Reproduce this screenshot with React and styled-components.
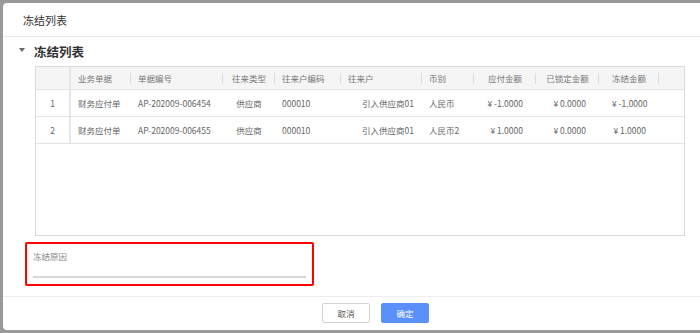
import React from 'react';
import styled, { createGlobalStyle } from 'styled-components';

const GlobalStyle = createGlobalStyle`
  html, body {
    margin: 0;
    padding: 0;
    background: #999;
    overflow: hidden;
  }
  body {
    font-family: "Noto Sans CJK SC", "Noto Sans", sans-serif;
  }
`

const Page = styled.div`
  width: 700px;
  height: 333px;
  padding: 3px 0 0 3px;
  box-sizing: border-box;
  overflow: hidden;
`

const Dialog = styled.div`
  width: 745px;
  height: 327px;
  background: #fff;
  border-radius: 4px;
  display: flex;
  flex-direction: column;
`

const Header = styled.div`
  height: 33px;
  display: flex;
  align-items: center;
  padding-left: 20px;
  font-size: 11px;
  color: #333;
  border-bottom: 1px solid #e8e8e8;
`

const Body = styled.div`
  flex: 1;
  display: flex;
  flex-direction: column;
`

const SectionTitle = styled.div`
  display: flex;
  align-items: center;
  height: 18px;
  margin-top: 5px;
  padding-left: 16px;
  font-size: 12.5px;
  font-weight: 700;
  color: #333;
`

const Caret = styled.span`
  width: 0;
  height: 0;
  border-left: 3px solid transparent;
  border-right: 3px solid transparent;
  border-top: 4px solid #666;
  margin-right: 9px;
  margin-top: -2px;
`

const TableWrap = styled.div`
  margin: 6px 0 0 32px;
  width: 650px;
  height: 170px;
  box-sizing: border-box;
  border: 1px solid #d9d9d9;
`

const Table = styled.table`
  width: 648px;
  border-collapse: collapse;
  table-layout: fixed;
  font-size: 8.5px;
  color: #666;
`

const Th = styled.th`
  position: relative;
  height: 22px;
  padding: 0 ${p => p.$pad || 7}px;
  font-weight: 400;
  color: #777;
  text-align: ${p => p.$align || 'left'};
  background: #f5f5f5;
  border-bottom: 1px solid #e3e3e3;
  border-right: ${p => (p.$index ? '2px solid #e6e6e6' : 'none')};
  white-space: nowrap;

  &::after {
    content: ${p => (p.$mark ? "''" : 'none')};
    position: absolute;
    right: 0;
    top: 6px;
    height: 11px;
    width: 1px;
    background: #dcdcdc;
  }
`

const Td = styled.td`
  height: 26px;
  padding: 0 ${p => p.$pad || 7}px;
  text-align: ${p => p.$align || 'left'};
  border-bottom: 1px solid #e3e3e3;
  border-right: ${p => (p.$index ? '2px solid #e6e6e6' : 'none')};
  white-space: nowrap;
  overflow: hidden;
`

const ReasonBox = styled.div`
  margin: 6px 0 0 22px;
  width: 289px;
  height: 44px;
  box-sizing: border-box;
  border: 2px solid #f00;
  border-radius: 2px;
  padding: 6px 6px 0 6px;
  display: flex;
  flex-direction: column;
`

const ReasonLabel = styled.label`
  font-size: 8.5px;
  color: #888;
  line-height: 12px;
`

const ReasonInput = styled.div`
  margin-top: 14px;
  height: 0;
  border-bottom: 2px solid #d6d6d6;
`

const Footer = styled.div`
  margin-top: 10px;
  border-top: 1px solid #eee;
  display: flex;
  justify-content: center;
  gap: 11px;
  padding-top: 6px;
`

const Button = styled.button`
  width: 48px;
  height: 20px;
  box-sizing: border-box;
  font-family: inherit;
  font-size: 8.5px;
  border-radius: 2px;
  padding: 0;
  border: 1px solid ${p => (p.$primary ? '#5b8ff9' : '#d4d4d4')};
  background: ${p => (p.$primary ? '#5b8ff9' : '#fff')};
  color: ${p => (p.$primary ? '#fff' : '#555')};
`

const columns = [
  { key: 'idx', title: '', width: 34, align: 'center', index: true },
  { key: 'bill', title: '业务单据', width: 61, mark: true },
  { key: 'no', title: '单据编号', width: 92, mark: true },
  { key: 'type', title: '往来类型', width: 52, align: 'center', mark: true },
  { key: 'code', title: '往来户编码', width: 66, mark: true },
  { key: 'party', title: '往来户', width: 81, bodyAlign: 'right', bodyPad: 8, mark: true },
  { key: 'cur', title: '币别', width: 52, mark: true },
  { key: 'due', title: '应付金额', width: 62, align: 'center', bodyAlign: 'right', bodyPad: 13, mark: true },
  { key: 'locked', title: '已锁定金额', width: 63, align: 'center', bodyAlign: 'right', bodyPad: 13, mark: true },
  { key: 'frozen', title: '冻结金额', width: 60, align: 'center', bodyAlign: 'right', bodyPad: 13, mark: true },
  { key: 'rest', title: '', width: 25 },
]

const rows = [
  {
    idx: '1', bill: '财务应付单', no: 'AP-202009-006454', type: '供应商', code: '000010',
    party: '引入供应商01', cur: '人民币', due: '¥ -1.0000', locked: '¥ 0.0000', frozen: '¥ -1.0000', rest: '',
  },
  {
    idx: '2', bill: '财务应付单', no: 'AP-202009-006455', type: '供应商', code: '000010',
    party: '引入供应商01', cur: '人民币2', due: '¥ 1.0000', locked: '¥ 0.0000', frozen: '¥ 1.0000', rest: '',
  },
]

export default function App() {
  return (
    <Page>
      <GlobalStyle />
      <Dialog>
        <Header>冻结列表</Header>
        <Body>
          <SectionTitle>
            <Caret />
            冻结列表
          </SectionTitle>

          <TableWrap>
            <Table>
              <colgroup>
                {columns.map(c => (
                  <col key={c.key} style={{ width: c.width }} />
                ))}
              </colgroup>
              <thead>
                <tr>
                  {columns.map(c => (
                    <Th key={c.key} $align={c.align} $index={c.index} $mark={c.mark}>
                      {c.title}
                    </Th>
                  ))}
                </tr>
              </thead>
              <tbody>
                {rows.map(r => (
                  <tr key={r.idx}>
                    {columns.map(c => (
                      <Td
                        key={c.key}
                        $align={c.bodyAlign || c.align}
                        $pad={c.bodyPad}
                        $index={c.index}
                      >
                        {r[c.key]}
                      </Td>
                    ))}
                  </tr>
                ))}
              </tbody>
            </Table>
          </TableWrap>

          <ReasonBox>
            <ReasonLabel>冻结原因</ReasonLabel>
            <ReasonInput />
          </ReasonBox>

          <Footer>
            <Button>取消</Button>
            <Button $primary>确定</Button>
          </Footer>
        </Body>
      </Dialog>
    </Page>
  )
}
